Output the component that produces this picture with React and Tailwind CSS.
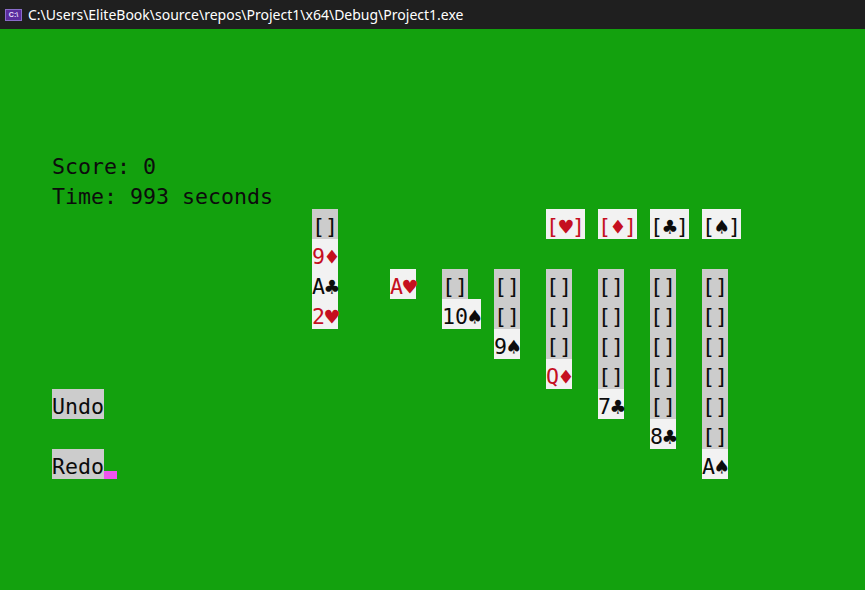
import React from "react";

const RED = "text-[#c50f1f]";
const BLK = "text-[#0c0c0c]";
const SUITS = "♠♣♥♦";

function Glyphs({ text }) {
  return (
    <>
      {Array.from(text).map((ch, i) =>
        SUITS.includes(ch) ? (
          <span key={i} className="inline-block w-[13px] text-center text-[23px] leading-[36px] align-top">
            {ch}
          </span>
        ) : (
          <span key={i} className="inline-block w-[13px] text-center align-top">
            {ch}
          </span>
        )
      )}
    </>
  );
}

function Cell({ kind, text, red }) {
  if (kind === "empty") return <div className="h-[30px]" />;
  const w = text.length === 3 ? "w-[39px]" : "w-[26px]";
  const bg = kind === "back" ? "bg-[#cccccc]" : "bg-[#f2f2f2]";
  const color = red ? RED : BLK;
  return (
    <div className={`h-[30px] ${w} ${bg} ${color} whitespace-pre leading-[36px] overflow-visible flex`}>
      <Glyphs text={text} />
    </div>
  );
}

const B = { kind: "back", text: "[]" };
const E = { kind: "empty", text: "" };
const F = (t, red) => ({ kind: "face", text: t, red });
const FD = (t, red) => ({ kind: "found", text: t, red });

const columns = [
  { w: "w-[78px]", cells: [B, F("9♦", true), F("A♣"), F("2♥", true)] },
  { w: "w-[52px]", cells: [E, E, F("A♥", true)] },
  { w: "w-[52px]", cells: [E, E, B, F("10♠")] },
  { w: "w-[52px]", cells: [E, E, B, B, F("9♠")] },
  { w: "w-[52px]", cells: [FD("[♥]", true), E, B, B, B, F("Q♦", true)] },
  { w: "w-[52px]", cells: [FD("[♦]", true), E, B, B, B, B, F("7♣")] },
  { w: "w-[52px]", cells: [FD("[♣]"), E, B, B, B, B, B, F("8♣")] },
  { w: "w-[52px]", cells: [FD("[♠]"), E, B, B, B, B, B, B, F("A♠")] },
];

export default function App() {
  const mono = { fontFamily: '"DejaVu Sans Mono", "Liberation Mono", monospace' };
  return (
    <div className="w-[865px] h-[590px] overflow-hidden flex flex-col bg-[#13a10e]">
      <div
        className="h-[29px] shrink-0 bg-[#1f1f1f] flex items-center pl-[5px] gap-[6px] text-[#ffffff] text-[14px]"
        style={{ fontFamily: '"Noto Sans", "Liberation Sans", sans-serif' }}
      >
        <div className="w-[17px] h-[12px] bg-[#5b2c9e] border border-[#8a6cc9] flex items-center justify-center">
          <span className="text-[7px] leading-none font-bold text-[#e8e0ff]" style={{ fontFamily: '"Liberation Sans", sans-serif' }}>C:\</span>
        </div>
        <span>C:\Users\EliteBook\source\repos\Project1\x64\Debug\Project1.exe</span>
      </div>
      <div className={`flex-1 flex pl-[52px] pt-[120px] text-[21.6px] ${BLK}`} style={mono}>
        <div className="w-[260px] flex flex-col whitespace-pre">
          <div className="h-[30px] leading-[36px]">Score: 0</div>
          <div className="h-[30px] leading-[36px]">Time: 993 seconds</div>
          <div className="h-[180px]" />
          <div className="h-[30px] leading-[36px]">
            <span className="inline-block h-[30px] bg-[#cccccc]">Undo</span>
          </div>
          <div className="h-[30px]" />
          <div className="h-[30px] leading-[36px] flex">
            <span className="inline-block h-[30px] bg-[#cccccc]">Redo</span>
            <div className="w-[13px] h-[30px] flex flex-col justify-end">
              <div className="h-[8px] bg-[#ee55ee]" />
            </div>
          </div>
        </div>
        <div className="flex pt-[60px]">
          {columns.map((c, i) => (
            <div key={i} className={`${c.w} flex flex-col`}>
              {c.cells.map((cell, j) => (
                <Cell key={j} {...cell} />
              ))}
            </div>
          ))}
        </div>
      </div>
    </div>
  );
}
